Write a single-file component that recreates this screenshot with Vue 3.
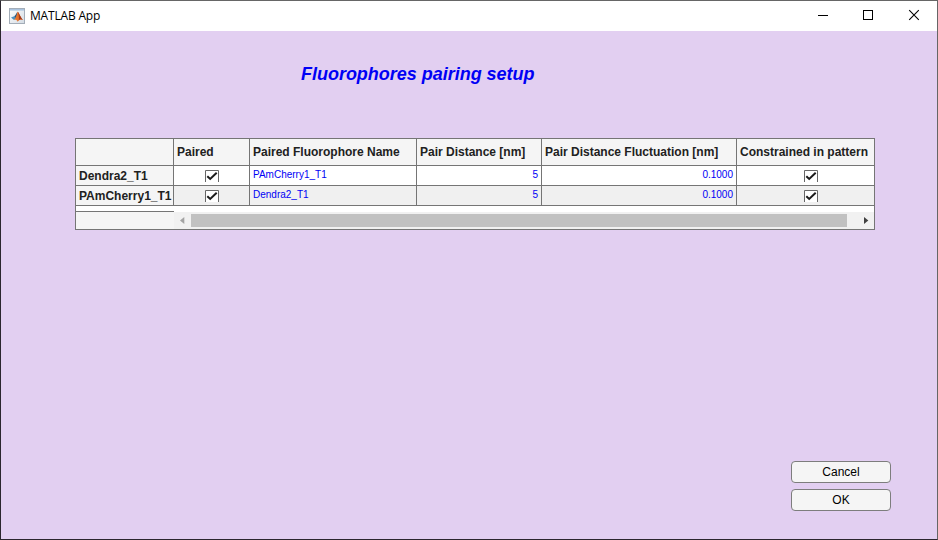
<script setup>
const columns = [
  'Paired',
  'Paired Fluorophore Name',
  'Pair Distance [nm]',
  'Pair Distance Fluctuation [nm]',
  'Constrained in pattern',
]
const rows = [
  { name: 'Dendra2_T1', partner: 'PAmCherry1_T1', distance: '5', fluctuation: '0.1000' },
  { name: 'PAmCherry1_T1', partner: 'Dendra2_T1', distance: '5', fluctuation: '0.1000' },
]
</script>

<template>
  <div class="window">
    <header class="titlebar">
      <svg class="logo" width="16" height="16" viewBox="0 0 16 16">
        <defs>
          <linearGradient id="frame" x1="0" y1="0" x2="1" y2="1">
            <stop offset="0" stop-color="#ffffff" />
            <stop offset="1" stop-color="#d3dbe3" />
          </linearGradient>
        </defs>
        <rect x="0.5" y="0.5" width="15" height="15" fill="url(#frame)" stroke="#a3adb8" />
        <rect x="1" y="1" width="14" height="1.6" fill="#a9c3df" />
        <path d="M2 9.6L5.2 8.2L7 10.4L5 12Z" fill="#4a90c0" />
        <path d="M5.2 8.2C7 7.4 7.3 5 8.6 3.8L7.6 9.8L7 10.4Z" fill="#27567f" />
        <path d="M8.6 3.8C10.4 5 11.4 9.6 14 12C11.8 11 10.6 11.4 8.6 13.8C8 12 7 11.6 5 12C7.6 9.8 7.6 6 8.6 3.8Z" fill="#e8742c" />
        <path d="M8.6 3.8C10.4 5 11.4 9.6 14 12C11.8 11 10.8 11.2 9.8 12.2C10.2 8.8 9.6 6 8.6 3.8Z" fill="#a33a1d" />
      </svg>
      <span class="caption">MATLAB App</span>
      <svg class="controls" width="108" height="30" viewBox="0 0 108 30" shape-rendering="crispEdges">
        <path d="M4 14.5H14" stroke="#000" />
        <rect x="49.5" y="9.5" width="9" height="9" fill="none" stroke="#000" />
        <path d="M95.2 9.2L104.8 18.8M104.8 9.2L95.2 18.8" stroke="#000" stroke-width="1.1" shape-rendering="auto" />
      </svg>
    </header>
    <main class="content">
      <h1>Fluorophores pairing setup</h1>
      <section class="table">
        <div class="row head">
          <div class="cell"></div>
          <div v-for="c in columns" :key="c" class="cell">{{ c }}</div>
        </div>
        <div v-for="r in rows" :key="r.name" class="row body">
          <div class="cell name">{{ r.name }}</div>
          <div class="cell check">
            <svg width="14" height="12" viewBox="0 0 14 12">
              <path d="M0.5 12V0.5H13.5V12" fill="#fff" stroke="#666" />
              <path d="M2.3 6.3L5.2 9L11.7 2.8" fill="none" stroke="#1c1c1c" stroke-width="2" />
            </svg>
          </div>
          <div class="cell value">{{ r.partner }}</div>
          <div class="cell value number">{{ r.distance }}</div>
          <div class="cell value number">{{ r.fluctuation }}</div>
          <div class="cell check last">
            <svg width="14" height="12" viewBox="0 0 14 12">
              <path d="M0.5 12V0.5H13.5V12" fill="#fff" stroke="#666" />
              <path d="M2.3 6.3L5.2 9L11.7 2.8" fill="none" stroke="#1c1c1c" stroke-width="2" />
            </svg>
          </div>
        </div>
        <div class="foot">
          <div class="corner"></div>
          <div class="scrollbar">
            <svg width="17" height="17" viewBox="0 0 17 17"><path d="M10.3 5V12L6 8.5Z" fill="#a3a3a3" /></svg>
            <div class="thumb"></div>
            <svg width="27" height="17" viewBox="0 0 27 17"><path d="M17 5V12L21.3 8.5Z" fill="#404040" /></svg>
          </div>
        </div>
      </section>
      <div class="actions">
        <button>Cancel</button>
        <button>OK</button>
      </div>
    </main>
  </div>
</template>

<style>
body { margin: 0; overflow: hidden; }
</style>

<style scoped>
.window {
  box-sizing: border-box; width: 938px; height: 540px;
  display: flex; flex-direction: column;
  border: 1px solid #2b262e; border-top-color: #666; border-right-color: #666;
  background: #e2cff1; font-family: "Liberation Sans", Arial, sans-serif; color: #000;
}
.titlebar { display: flex; align-items: center; height: 30px; padding: 0 15px 0 8px; background: #fff; }
.caption { margin-left: 5px; font: 12px/16px "Open Sans", "Noto Sans", sans-serif; letter-spacing: -0.18px; }
.controls { margin-left: auto; }
.content { flex: 1; display: flex; flex-direction: column; }
h1 { margin: 33px 0 0 300px; font-size: 18px; line-height: 20px; font-style: italic; font-weight: bold; letter-spacing: -0.02px; color: #0000f5; white-space: nowrap; }
.table { box-sizing: border-box; width: 800px; height: 92px; margin: 54px 0 0 74px; border: 1px solid #757575; background: #fff; }
.row { display: grid; grid-template-columns: 98px 76px 167px 125px 195px 137px; grid-template-rows: 100%; height: 20px; }
.head { height: 27px; background: #f5f5f5; }
.cell { box-sizing: border-box; min-width: 0; padding: 0 3px; border-right: 1px solid #757575; border-bottom: 1px solid #757575; white-space: nowrap; }
.cell:last-child { border-right: 0; }
.head .cell { font-size: 12px; line-height: 26px; font-weight: bold; color: #212121; }
.body:nth-child(3) .cell { background: #f0f0f0; }
.body .cell.name { background: #f5f5f5; font-size: 12px; line-height: 20px; font-weight: bold; color: #212121; }
.check { display: flex; justify-content: center; align-items: flex-start; padding-top: 4px; }
.check.last { padding-left: 13px; }
.value { font-size: 10px; line-height: 17px; color: #0000f5; }
.number { text-align: right; }
.foot { display: flex; align-items: flex-end; height: 23px; }
.corner { box-sizing: border-box; width: 98px; height: 18px; border-top: 1px solid #757575; background: #f5f5f5; }
.scrollbar { display: flex; align-items: center; flex: 1; height: 17px; background: #f1f1f1; }
.thumb { flex: 1; height: 13px; background: #c1c1c1; }
.actions { display: flex; flex-direction: column; gap: 6px; margin: auto 46px 28px auto; }
button { box-sizing: border-box; width: 100px; height: 22px; padding: 0; border: 1px solid #7d7d7d; border-radius: 4px; background: #f5f5f5; color: #000; font: 12px/20px "Liberation Sans", Arial, sans-serif; }
</style>
